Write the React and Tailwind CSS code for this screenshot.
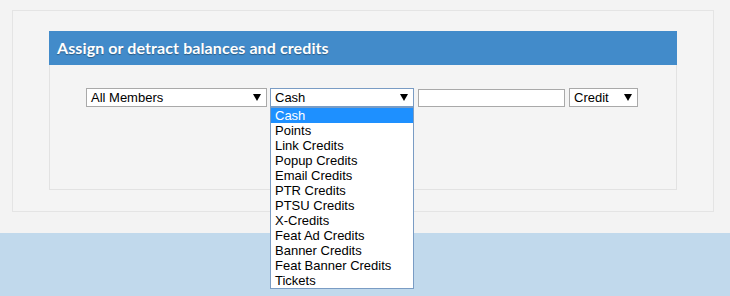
import React from "react";

const options = [
  "Cash",
  "Points",
  "Link Credits",
  "Popup Credits",
  "Email Credits",
  "PTR Credits",
  "PTSU Credits",
  "X-Credits",
  "Feat Ad Credits",
  "Banner Credits",
  "Feat Banner Credits",
  "Tickets",
];

const Arrow = () => (
  <svg width="8" height="7" viewBox="0 0 8 7" className="shrink-0">
    <path d="M0 0H8L4 7Z" fill="#000" />
  </svg>
);

const FakeSelect = ({ label, className, focused }) => (
  <div
    className={`flex h-[19px] items-center justify-between bg-white pl-[4px] pr-[5px] text-[13px] leading-none text-black ${
      focused ? "border border-[#7a9cc4]" : "border border-[#a9a9a9]"
    } ${className}`}
  >
    <span>{label}</span>
    <Arrow />
  </div>
);

const App = () => {
  return (
    <div className="w-[730px] h-[296px] overflow-hidden bg-[#c1d9ec] font-['Liberation_Sans',Arial,sans-serif]">
      <div className="h-[233px] bg-[#f3f3f3] pt-[10px] pl-[12px]">
        <div className="w-[702px] h-[202px] border border-[#e4e4e4] bg-[#f4f4f4] pt-[20px] pl-[36px]">
          <div className="w-[628px] border border-[#e2e2e2] border-t-0 bg-[#f4f4f4]">
            <div className="h-[34px] -mx-px bg-[#428bca] pl-[8px] flex items-center">
              <h2 className="text-[16px] font-bold text-white font-['Lato',sans-serif] tracking-[0.1px] [text-shadow:0_1px_1px_rgba(0,0,0,0.35)]">
                Assign or detract balances and credits
              </h2>
            </div>
            <div className="h-[124px] pt-[23px] pl-[36px]">
              <div className="flex items-start gap-[3px]">
                <FakeSelect label="All Members" className="w-[181px]" />
                <div className="relative">
                  <FakeSelect label="Cash" className="w-[144px]" focused />
                  {/* open dropdown list */}
                  <ul className="absolute left-0 top-[19px] z-10 w-[144px] border border-[#7a9cc4] bg-white text-[13px] leading-[15px] text-black">
                    {options.map((o, i) => (
                      <li
                        key={o}
                        className={`h-[15px] pl-[4px] ${i === 0 ? "bg-[#1e90ff] text-white" : ""}`}
                      >
                        {o}
                      </li>
                    ))}
                  </ul>
                </div>
                <div className="ml-[1px] mt-px h-[18px] w-[147px] border border-[#a9a9a9] bg-white" />
                <FakeSelect label="Credit" className="ml-[1px] w-[69px]" />
              </div>
            </div>
          </div>
        </div>
      </div>
    </div>
  );
};

export default App;
